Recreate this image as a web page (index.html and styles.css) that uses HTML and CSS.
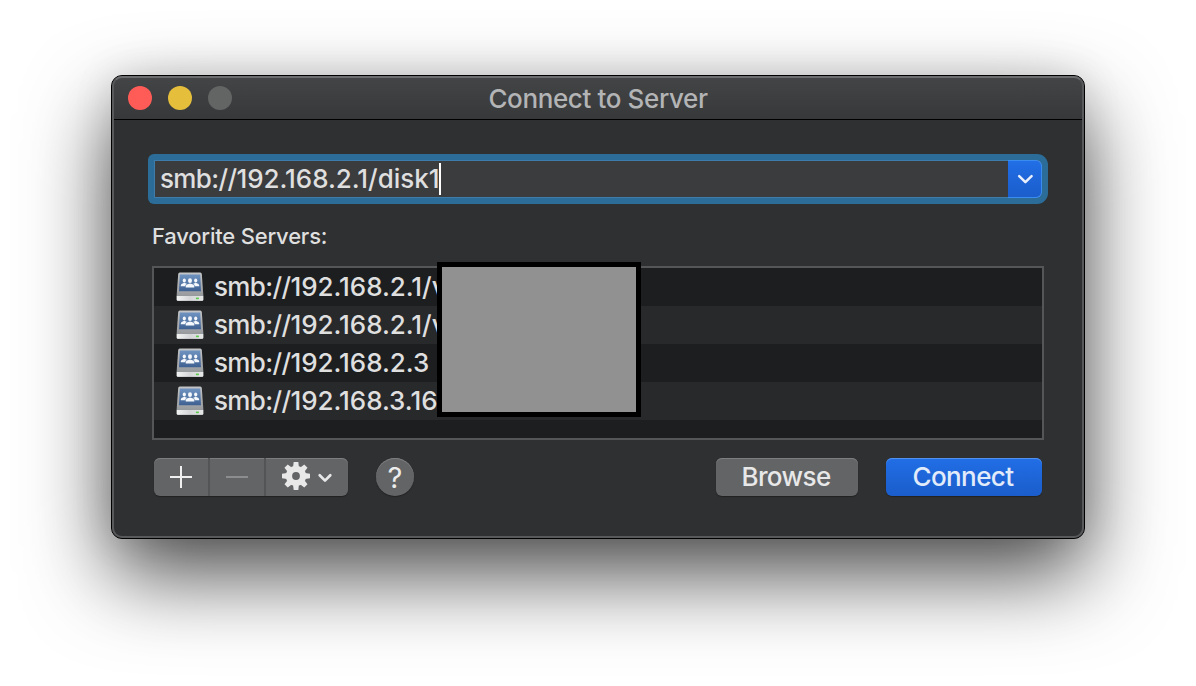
FILE: index.html
```html
<!DOCTYPE html>
<html lang="en">
<head>
<meta charset="utf-8">
<title>Connect to Server</title>
<link rel="stylesheet" href="styles.css">
</head>
<body>
<svg width="0" height="0" class="defs">
  <defs>
    <linearGradient id="disk" x1="0" y1="0" x2="0" y2="1"><stop offset="0" stop-color="#c3c5c7"/><stop offset="1" stop-color="#8e9194"/></linearGradient>
    <linearGradient id="plate" x1="0" y1="0" x2="0" y2="1"><stop offset="0" stop-color="#6f93c0"/><stop offset="1" stop-color="#3f6192"/></linearGradient>
    <linearGradient id="front" x1="0" y1="0" x2="1" y2="0"><stop offset="0" stop-color="#f2f3f3"/><stop offset=".5" stop-color="#d4d6d7"/><stop offset="1" stop-color="#e6e7e7"/></linearGradient>
    <symbol id="server" viewBox="0 0 28 30">
      <path d="M3.7 .5H24.3Q25.6 .5 25.8 2L27.4 24V27.5Q27.4 29 26 29H2Q.6 29 .6 27.5V24L2.2 2Q2.4 .5 3.7 .5Z" fill="url(#disk)"/>
      <path d="M3.8 2.6H24.2L25 19.3H3Z" fill="url(#plate)"/>
      <path d="M.8 24H27.2V27.5Q27.2 28.8 26 28.8H2Q.8 28.8 .8 27.5Z" fill="url(#front)"/>
      <rect x="19.8" y="25.5" width="3.2" height="1.8" rx=".7" fill="#62c955"/>
      <g fill="#f4f7fb">
        <ellipse cx="8.3" cy="8.5" rx="1.6" ry="2"/><ellipse cx="19.7" cy="8.5" rx="1.6" ry="2"/><ellipse cx="14" cy="8.7" rx="2" ry="2.4"/>
        <path d="M4.8 14.3V13.3Q5 11.6 7.1 11.2L8.3 10.8L10.8 11.7Q9.4 12.6 9.2 14.3ZM23.2 14.3V13.3Q23 11.6 20.9 11.2L19.7 10.8L17.2 11.7Q18.6 12.6 18.8 14.3ZM9.7 15.5V14.3Q9.8 12.4 12.2 12L14 11.4L15.8 12Q18.2 12.4 18.3 14.3V15.5Z"/>
      </g>
    </symbol>
  </defs>
</svg>
<main class="window">
  <header class="titlebar">
    <div class="lights"><i class="light close"></i><i class="light minimize"></i><i class="light zoom"></i></div>
    <h1 class="title">Connect to Server</h1>
  </header>
  <section class="content">
    <div class="address">
      <div class="address-inner">
        <span class="url"><span class="scheme">smb://</span>192.168.2.1/disk1</span><i class="caret"></i>
        <div class="dropdown"><svg width="18" height="12" viewBox="0 0 18 12"><path d="M3.2 3.2L9.4 9.2L15.6 3.2" fill="none" stroke="#e9f0fc" stroke-width="2.5" stroke-linecap="round" stroke-linejoin="round"/></svg></div>
      </div>
    </div>
    <h2 class="label">Favorite Servers:</h2>
    <div class="list">
      <div class="row"><svg class="server"><use href="#server"/></svg><span class="url"><span class="scheme">smb://</span>192.168.2.1/v</span></div>
      <div class="row"><svg class="server"><use href="#server"/></svg><span class="url"><span class="scheme">smb://</span>192.168.2.1/v</span></div>
      <div class="row"><svg class="server"><use href="#server"/></svg><span class="url"><span class="scheme">smb://</span>192.168.2.3</span></div>
      <div class="row"><svg class="server"><use href="#server"/></svg><span class="url"><span class="scheme">smb://</span>192.168.3.16</span></div>
      <div class="redaction"></div>
    </div>
    <footer class="actions">
      <div class="segments">
        <div class="segment"><svg width="24" height="24" viewBox="0 0 24 24"><path d="M1 12H23M12 1V23" stroke="#f0f0f0" stroke-width="2"/></svg></div>
        <div class="segment"><svg width="24" height="24" viewBox="0 0 24 24"><path d="M1 12H23" stroke="#8c8d8f" stroke-width="2"/></svg></div>
        <div class="segment gear">
          <svg width="28" height="28" viewBox="-14 -14 28 28"><g fill="#e8e8e9"><path fill-rule="evenodd" d="M0-10.2A10.2 10.2 0 1 0 0 10.2A10.2 10.2 0 1 0 0-10.2M0-3.9A3.9 3.9 0 1 1 0 3.9A3.9 3.9 0 1 1 0-3.9"/><path id="tooth" d="M-2.9-9L-2.3-14H2.3L2.9-9Z"/><use href="#tooth" transform="rotate(45)"/><use href="#tooth" transform="rotate(90)"/><use href="#tooth" transform="rotate(135)"/><use href="#tooth" transform="rotate(180)"/><use href="#tooth" transform="rotate(225)"/><use href="#tooth" transform="rotate(270)"/><use href="#tooth" transform="rotate(315)"/></g></svg>
          <svg class="chevron" width="16" height="12" viewBox="0 0 16 12"><path d="M2.7 4.3L8 9.6L13.3 4.3" fill="none" stroke="#e8e8e9" stroke-width="2.7" stroke-linecap="round" stroke-linejoin="round"/></svg>
        </div>
      </div>
      <div class="help">?</div>
      <div class="button browse"><span>Browse</span></div>
      <div class="button connect"><span>Connect</span></div>
    </footer>
  </section>
</main>
</body>
</html>
```
FILE: styles.css
```css
* { box-sizing: border-box; }
body { margin: 0; width: 1196px; height: 686px; padding: 75px 111px; overflow: hidden; background: #fff; font-family: Inter, "Liberation Sans", sans-serif; font-weight: 500; color: #dfdfdf; font-size: 26px; }
h1, h2 { margin: 0; font-weight: 500; }
svg { display: block; flex: none; }
.defs { position: absolute; }
.window { position: relative; width: 974px; height: 464px; border: 1px solid #000; border-radius: 11px; background: #2f3032; box-shadow: 0 36px 84px rgba(0,0,0,.7), 0 0 40px rgba(0,0,0,.1); }
.window::after { content: ""; position: absolute; inset: 0; border: 2px solid #58595b; border-top-color: #6c6d6e; border-radius: 10px; pointer-events: none; }
.titlebar { height: 44px; display: grid; grid-template-columns: 1fr auto 1fr; align-items: center; border-bottom: 1px solid #000; border-radius: 10px 10px 0 0; background: linear-gradient(#444547, #373839); }
.lights { display: flex; gap: 16px; padding-left: 16px; }
.light { width: 24px; height: 24px; border-radius: 50%; }
.close { background: #ff5b57; }
.minimize { background: #e5bf3c; }
.zoom { background: #636464; }
.title { font-size: 26px; line-height: 40px; letter-spacing: -.38px; color: #b3b4b5; white-space: nowrap; padding-top: 2px; }
.content { padding: 34px 40px 0; }
.address { height: 50px; margin: 0 -4px; padding: 6px; border-radius: 6px 11px 11px 6px; background: #2b6d98; }
.address-inner { height: 38px; display: flex; align-items: center; padding-left: 6px; background: #3b3c3e; border-radius: 0 6px 6px 0; box-shadow: inset 0 0 0 1px #3e7dab; }
.url { line-height: 38px; white-space: nowrap; letter-spacing: -.03px; }
.scheme { letter-spacing: -.65px; }
.caret { width: 2px; height: 32px; background: #fff; }
.dropdown { width: 34px; height: 38px; margin-left: auto; display: flex; align-items: center; justify-content: center; border: 1px solid #3b8cf0; border-left: 0; border-radius: 0 6px 6px 0; background: linear-gradient(#216ee6, #1b5dcb); }
.label { font-size: 22px; line-height: 30px; margin-top: 17px; letter-spacing: -.2px; white-space: nowrap; }
.list { position: relative; height: 174px; margin-top: 15px; border: 2px solid #555658; background: #1d1e20; }
.row { height: 38px; display: flex; align-items: center; padding-left: 22px; gap: 10px; }
.row:nth-child(even) { background: #28292b; }
.server { width: 28px; height: 30px; }
.redaction { position: absolute; left: 283px; top: -6px; width: 204px; height: 155px; border: 5px solid #000; background: #919191; }
.actions { display: flex; padding: 18px 2px 0; }
.segments { display: flex; width: 194px; height: 38px; border-radius: 6px; background: #636466; box-shadow: inset 0 1px #7d7e80, 0 1px 1px #222; }
.segment { width: 56px; display: flex; align-items: center; justify-content: center; border-right: 2px solid #535456; }
.segment.gear { width: 82px; border: 0; justify-content: flex-start; padding-left: 16px; gap: 7px; }
.segment.gear > svg:first-child { margin-top: -2px; }
.help { width: 38px; height: 38px; margin-left: 28px; border-radius: 50%; background: #636466; box-shadow: inset 0 1px #7d7e80, 0 1px 1px #222; text-align: center; line-height: 39px; font-size: 29px; font-weight: 400; color: #ececec; }
.button { height: 38px; padding-right: 2px; border-radius: 6px; text-align: center; line-height: 38px; letter-spacing: -.6px; color: #e8e8e9; }
.browse { width: 142px; margin-left: auto; background: #636466; box-shadow: inset 0 1px #7d7e80, 0 1px 1px #222; }
.connect { width: 156px; margin-left: 28px; background: linear-gradient(#216ee6, #1b5dcb); box-shadow: inset 0 1px #5291ef, 0 1px 1px #222; color: #e2ebfa; }
```
